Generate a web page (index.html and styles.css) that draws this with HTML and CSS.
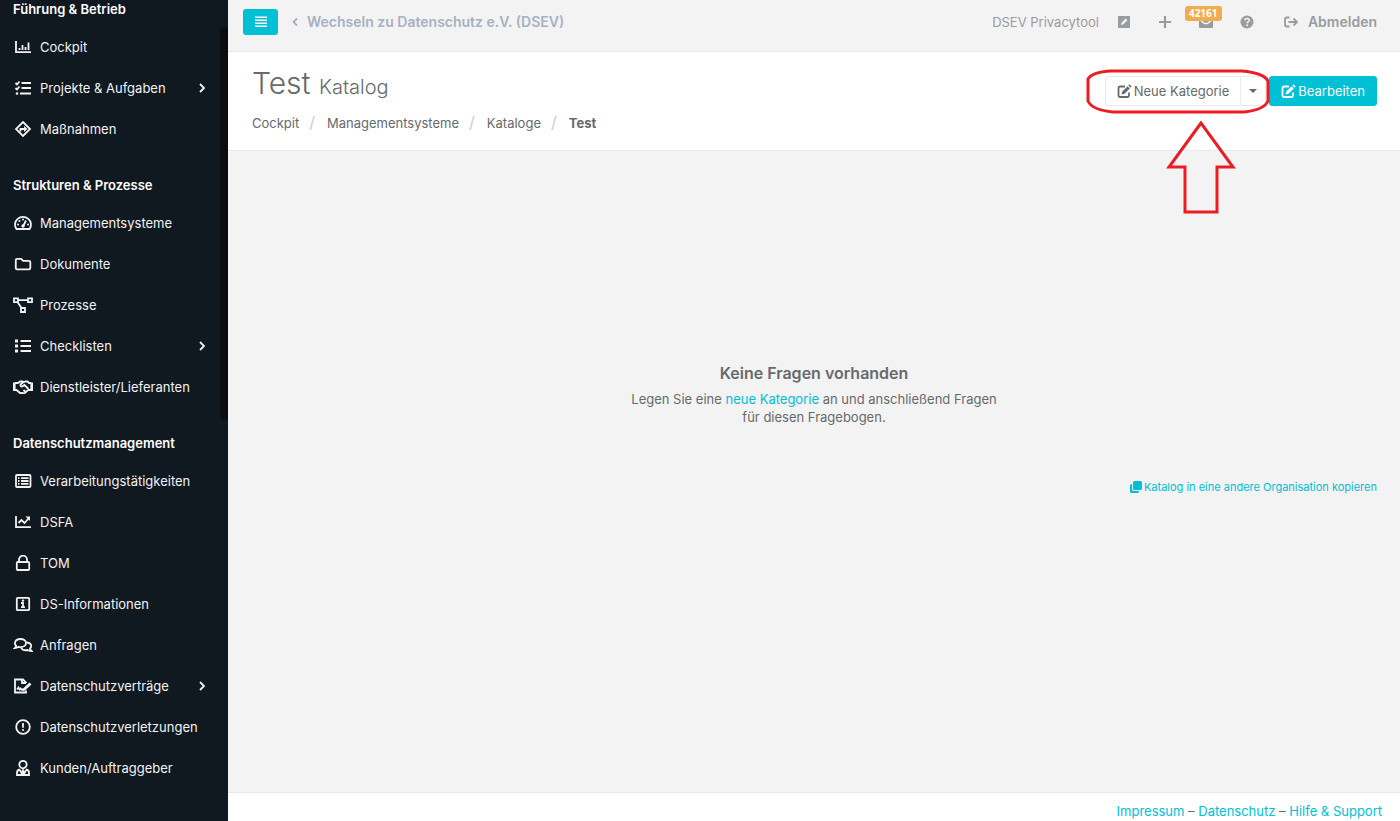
FILE: index.html
```html
<!DOCTYPE html>
<html lang="de">
<head>
    <meta charset="UTF-8">
    <meta name="viewport" content="width=device-width, initial-scale=1.0">
    <title>Test - Katalog</title>
    <link rel="stylesheet" href="styles.css">
</head>
<body>
<nav class="sidebar">
    <h3 class="nav-title">Führung &amp; Betrieb</h3>
    <ul class="nav-list">
        <li><a href="#"><svg class="icon" viewBox="0 0 20 16"><path d="M3 2v11.200h15M6.500 11V9M9.500 11V6M12.500 11V8M15.500 11V3.500"/></svg>Cockpit</a></li>
        <li><a href="#"><svg class="icon" viewBox="0 0 20 16"><path d="M2.500 3l1.500 1.500L6.500 1.500M2.500 8L4 9.500l2.500-3M8.500 3h9.500M8.500 8h9.500M7 13.500h11"/><circle class="solid" cx="4" cy="13.500" r="1.300"/></svg>Projekte &amp; Aufgaben<svg class="arrow" viewBox="0 0 8 10"><path d="M2 1l4 4-4 4"/></svg></a></li>
        <li><a href="#"><svg class="icon" viewBox="0 0 20 16"><path d="M10 1l7 7-7 7-7-7z"/><path d="M7.500 10.500V8H12"/><path class="solid" d="M11 5l3.500 3-3.500 3z"/></svg>Maßnahmen</a></li>
    </ul>

    <h3 class="nav-title">Strukturen &amp; Prozesse</h3>
    <ul class="nav-list">
        <li><a href="#"><svg class="icon" viewBox="0 0 20 16"><path d="M3.400 14a8 7.700 0 1 1 13.200 0zM10 11.500l3-6"/><circle class="solid" cx="10" cy="11" r="1.700"/><circle class="solid" cx="5" cy="9.500" r="1"/><circle class="solid" cx="6.500" cy="6" r="1"/><circle class="solid" cx="10" cy="4.500" r="1"/><circle class="solid" cx="15" cy="9.500" r="1"/></svg>Managementsysteme</a></li>
        <li><a href="#"><svg class="icon" viewBox="0 0 20 16"><path d="M4 2.800h4.200l2 2H16q1.300 0 1.300 1.200v6q0 1.300-1.300 1.300H4Q2.800 13.300 2.800 12V4q0-1.200 1.200-1.200z"/></svg>Dokumente</a></li>
        <li><a href="#"><svg class="icon" viewBox="0 0 20 16"><path d="M1 1.300h4v3.800H1zM15 1.300h4v3.800h-4zM8 11h4v4H8zM5 3.200h10M4.500 5l4 6"/></svg>Prozesse</a></li>
        <li><a href="#"><svg class="icon" viewBox="0 0 20 16"><path d="M7.500 3H18M7.500 8H18M7.500 13H18"/><path class="solid" d="M2 1.500h3v3H2zM2 6.500h3v3H2zM2 11.500h3v3H2z"/></svg>Checklisten<svg class="arrow" viewBox="0 0 8 10"><path d="M2 1l4 4-4 4"/></svg></a></li>
        <li><a href="#"><svg class="icon" viewBox="0 0 20 16"><path class="solid" d="M0 3.500h2.600V12H0zM17.400 3.500H20V12h-2.600z"/><path d="M2 4h3l2-1.500h2.500L11 3l1.500-.5h2L16 4h2M2 11h1.500l3.500 3h2l1 .2 2-.2 3-3H18M10.500 3L7.500 5.500q-.3 2 1.500 2l2.500-1.500 4 4M10.500 11l1.500 1.500"/></svg>Dienstleister/Lieferanten</a></li>
    </ul>

    <h3 class="nav-title">Datenschutzmanagement</h3>
    <ul class="nav-list">
        <li><a href="#"><svg class="icon" viewBox="0 0 20 16"><rect x="3" y="2" width="14.500" height="12" rx="1"/><path d="M8 5.200h7.500M8 8h7.500M8 10.800h7.500M5 5.200h1.500M5 8h1.500M5 10.800h1.500"/></svg>Verarbeitungstätigkeiten</a></li>
        <li><a href="#"><svg class="icon" viewBox="0 0 20 16"><path d="M3 2v11.200h15M5.500 9l3-3 3 3 4-4.500"/><path class="solid" d="M12.500 2.500H17V7z"/></svg>DSFA</a></li>
        <li><a href="#"><svg class="icon" viewBox="0 0 20 16"><rect x="3.800" y="7" width="12.400" height="8" rx="1"/><path d="M6 7V4.500a4 3.800 0 0 1 8 0V7"/></svg>TOM</a></li>
        <li><a href="#"><svg class="icon" viewBox="0 0 20 16"><rect x="3.800" y="1.800" width="12.400" height="12.400" rx="1"/><path d="M8 7h2v4M8 11.200h4"/><circle class="solid" cx="10" cy="4.600" r="1.200"/></svg>DS-Informationen</a></li>
        <li><a href="#"><svg class="icon" viewBox="0 0 20 16"><path d="M2 11q1.300-1.200 1.100-2.200C.5 6 2.500 2 7.300 2c7.600 0 7.600 8.200 0 8.200q-1.200 0-2-.3Q4 11 2 11z"/><path d="M13.500 5.500c4.500 0 6 3.500 3.500 6q.3 1.500 1.500 2.500-2.500 0-4-1-4.500 1-6.500-2"/></svg>Anfragen</a></li>
        <li><a href="#"><svg class="icon" viewBox="0 0 20 16"><path d="M13 5V4.500L10 1.500H2v13h11v-2M9 1.500V5h4M4 11.500l1.500-2 1.200 2 1-1 .8 1h1.500"/><path class="solid" d="M16.500 4.500l2 2-6.500 6-2.700.7.700-2.700z"/></svg>Datenschutzverträge<svg class="arrow" viewBox="0 0 8 10"><path d="M2 1l4 4-4 4"/></svg></a></li>
        <li><a href="#"><svg class="icon" viewBox="0 0 20 16"><circle cx="10" cy="8" r="6.800"/><path d="M10 4v4.800"/><circle class="solid" cx="10" cy="11" r="1.100"/></svg>Datenschutzverletzungen</a></li>
        <li><a href="#"><svg class="icon" viewBox="0 0 20 16"><circle cx="10" cy="4.600" r="3.700"/><path d="M7 9.500q-3 .5-3 3.200V15h12v-2.300q0-2.700-3-3.200M7 10l2 4 1-3.500 1 3.500 2-4"/></svg>Kunden/Auftraggeber</a></li>
    </ul>
    <div class="scroll-thumb"></div>
</nav>

<div class="page">
    <div class="topbar">
        <button type="button" class="menu-btn" aria-label="Menü"><svg class="bars" viewBox="0 0 12 12"><path d="M0 1.200h12M0 4.200h12M0 7.200h12M0 10.200h12"/></svg></button>
        <a href="#" class="switch-link"><svg class="chevron" viewBox="0 0 8 10"><path d="M6 1.500L2.500 5 6 8.500"/></svg>Wechseln zu Datenschutz e.V. (DSEV)</a>
        <div class="top-links">
            <span class="user-name">DSEV Privacytool</span>
            <a href="#" class="top-icon" aria-label="Bearbeiten"><svg viewBox="0 0 14 14"><rect x="1" y="1" width="12" height="12" rx="1"/><path class="cut" d="M4 10l.5-2.200L8.700 3.600l1.700 1.700L6.200 9.500z"/></svg></a>
            <a href="#" class="top-icon" aria-label="Neu"><svg viewBox="0 0 14 14"><path d="M5.900 1h2.200v4.900H13v2.200H8.100V13H5.900V8.100H1V5.900h4.900z"/></svg></a>
            <a href="#" class="top-icon" aria-label="Nachrichten"><svg viewBox="0 0 14 14"><rect x="0" y="2" width="14" height="11" rx="1"/><path class="cut-line" d="M0 4l5.500 4.500h3L14 4"/></svg><span class="badge">42161</span></a>
            <a href="#" class="top-icon" aria-label="Hilfe"><svg viewBox="0 0 14 14"><circle cx="7" cy="7" r="6.500"/><path class="cut-line" d="M4.800 5.400C5 2.800 9.200 3 9.200 5.300 9.200 6.800 7 6.800 7 8.300"/><circle class="cut" cx="7" cy="10.300" r="1"/></svg></a>
            <a href="#" class="logout"><svg class="logout-icon" viewBox="0 0 14 14"><path d="M5.500 2.500H3q-2 0-2 2v5q0 2 2 2h2.500M4.500 7h8M9.500 3.500L13 7l-3.500 3.500"/></svg>Abmelden</a>
        </div>
    </div>

    <header class="page-heading">
        <div>
            <h1>Test <small>Katalog</small></h1>
            <ol class="breadcrumb">
                <li><a href="#">Cockpit</a></li>
                <li><a href="#">Managementsysteme</a></li>
                <li><a href="#">Kataloge</a></li>
                <li><strong>Test</strong></li>
            </ol>
        </div>
        <div class="actions">
            <div class="btn-group">
                <button type="button" class="btn btn-white"><svg class="edit-icon" viewBox="0 0 15 14"><path class="edit-box" d="M8 2.500H3Q1.500 2.500 1.500 4v7.500Q1.500 13 3 13h7.500q1.500 0 1.500-1.500V8.500"/><path d="M12.500 0.300l2.200 2.200-1.200 1.200-2.200-2.200zM10.600 2.200l2.200 2.200L7.500 9.700l-3 .8.800-3z"/></svg>Neue Kategorie</button>
                <button type="button" class="btn btn-white btn-caret" aria-label="Weitere Optionen"><span class="caret"></span></button>
            </div>
            <button type="button" class="btn btn-primary"><svg class="edit-icon" viewBox="0 0 15 14"><path class="edit-box" d="M8 2.500H3Q1.500 2.500 1.500 4v7.500Q1.500 13 3 13h7.500q1.500 0 1.500-1.500V8.500"/><path d="M12.500 0.300l2.200 2.200-1.200 1.200-2.200-2.200zM10.600 2.200l2.200 2.200L7.500 9.700l-3 .8.800-3z"/></svg>Bearbeiten</button>
            <svg class="marker" viewBox="0 0 184 148"><path d="M2 11Q6 4 25 3H156Q178 5 182 13V33Q178 42 158 44H27Q6 42 2 33ZM115 55L83 99H99V144H131V99H147Z"/></svg>
        </div>
    </header>

    <main class="content">
        <section class="empty">
            <h2>Keine Fragen vorhanden</h2>
            <p>Legen Sie eine <a href="#">neue Kategorie</a> an und anschließend Fragen<br>für diesen Fragebogen.</p>
        </section>
        <a href="#" class="copy-link"><svg class="copy-icon" viewBox="0 0 12 12"><rect x="3" y="0" width="9" height="9" rx="1.500"/><path d="M2 3H1.500Q0 3 0 4.500v6Q0 12 1.500 12h6Q9 12 9 10.500V10H4Q2 10 2 8z"/></svg>Katalog in eine andere Organisation kopieren</a>
    </main>

    <footer class="footer">
        <a href="#">Impressum</a> – <a href="#">Datenschutz</a> – <a href="#">Hilfe &amp; Support</a>
    </footer>
</div>
</body>
</html>
```

FILE: styles.css
```css
* {
    box-sizing: border-box;
}
body {
    margin: 0;
    display: flex;
    height: 100vh;
    overflow: hidden;
    background: #f3f3f3;
    color: #676a6c;
    font-family: Inter, "Open Sans", sans-serif;
    font-size: 13px;
    line-height: 18px;
}
a {
    color: #00c0d6;
    text-decoration: none;
}
button {
    font-family: inherit;
    cursor: pointer;
}

/* Sidebar */
.sidebar {
    position: relative;
    flex: 0 0 228px;
    overflow: hidden;
    background: #101820;
}
.nav-title {
    margin: 0 0 8px;
    padding-left: 13px;
    color: #fff;
    font-size: 13px;
    font-weight: 600;
}
.nav-list {
    list-style: none;
    margin: 0 0 27px;
    padding: 0;
}
.nav-list a {
    display: flex;
    align-items: center;
    height: 41px;
    padding: 0 22px 0 13px;
    color: #f2f3f4;
}
.icon {
    width: 20px;
    height: 16px;
    margin-right: 7px;
}
.icon, .arrow, .bars, .chevron, .logout-icon {
    fill: none;
    stroke: currentColor;
    stroke-width: 1.8;
}
.icon .solid {
    fill: currentColor;
    stroke: none;
}
.arrow {
    width: 8px;
    height: 10px;
    margin-left: auto;
}
.scroll-thumb {
    position: absolute;
    top: 27px;
    right: 0;
    width: 8px;
    height: 393px;
    border-radius: 4px;
    background: #0b0d10;
}

/* Top bar */
.page {
    flex: 1;
    min-width: 0;
    display: flex;
    flex-direction: column;
}
.topbar {
    display: flex;
    align-items: center;
    padding: 9px 23px 16px 15px;
    border-bottom: 1px solid #e7eaec;
}
.menu-btn {
    display: flex;
    align-items: center;
    justify-content: center;
    width: 35px;
    height: 26px;
    padding: 0;
    border: none;
    border-radius: 3px;
    background: #00c0d6;
    color: #fff;
}
.bars {
    width: 12px;
    height: 12px;
    stroke-width: 1.5;
}
.chevron {
    width: 8px;
    height: 10px;
    margin-right: 8px;
}
.switch-link {
    display: flex;
    align-items: center;
    margin-left: 13px;
    color: #a7b1c2;
    font-size: 14px;
    font-weight: 600;
}
.top-links {
    display: flex;
    align-items: center;
    margin-left: auto;
    color: #999c9e;
}
.user-name {
    margin-right: 18px;
}
.top-icon {
    position: relative;
    display: flex;
    margin-right: 27px;
    color: #999c9e;
}
.top-icon svg {
    width: 14px;
    height: 14px;
    fill: currentColor;
}
.top-icon .cut {
    fill: #f3f3f3;
}
.top-icon .cut-line {
    fill: none;
    stroke: #f3f3f3;
    stroke-width: 1.5;
}
.badge {
    position: absolute;
    top: -9px;
    left: -14px;
    padding: 0 4px;
    border-radius: 3px;
    background: #f0ad4e;
    color: #fff;
    font-family: "Open Sans", sans-serif;
    font-size: 10px;
    font-weight: 700;
    line-height: 15px;
}
.logout {
    display: flex;
    align-items: center;
    gap: 10px;
    margin-left: 3px;
    color: #999c9e;
    font-size: 14px;
    font-weight: 600;
}
.logout-icon {
    width: 14px;
    height: 14px;
}

/* Page heading */
.page-heading {
    display: flex;
    justify-content: space-between;
    align-items: flex-start;
    padding: 12px 23px 18px 24px;
    border-bottom: 1px solid #e7eaec;
    background: #fff;
}
h1 {
    margin: 0 0 7px;
    font-size: 30px;
    font-weight: 300;
    line-height: 38px;
}
h1 small {
    font-size: 20px;
    font-weight: 300;
}
.breadcrumb {
    display: flex;
    align-items: baseline;
    list-style: none;
    margin: 0;
    padding: 0;
}
.breadcrumb a {
    color: inherit;
}
.breadcrumb li + li::before {
    content: "/";
    padding: 0 12px 0 10px;
    color: #ccc;
    font-size: 16px;
}
.actions {
    position: relative;
    display: flex;
    gap: 3px;
    padding-top: 12px;
}
.btn-group {
    display: flex;
}
.btn {
    display: flex;
    align-items: center;
    gap: 2px;
    height: 30px;
    padding: 0 11px;
    border: 1px solid #00c0d6;
    border-radius: 3px;
    font-size: 13px;
}
.btn-primary {
    background: #00c0d6;
    color: #fff;
}
.btn-white {
    border-color: #e7eaec;
    border-radius: 3px 0 0 3px;
    background: #fff;
    color: #676a6c;
}
.btn-caret {
    margin-left: -1px;
    padding: 0 8px;
    border-radius: 0 3px 3px 0;
}
.caret {
    border-top: 4px solid #676a6c;
    border-left: 4px solid transparent;
    border-right: 4px solid transparent;
}
.edit-icon {
    width: 15px;
    height: 14px;
    fill: currentColor;
}
.edit-icon .edit-box {
    fill: none;
    stroke: currentColor;
    stroke-width: 1.8;
}
.marker {
    position: absolute;
    top: 4px;
    right: 107px;
    width: 184px;
    height: 148px;
    fill: none;
    stroke: #ec1c24;
    stroke-width: 3;
    pointer-events: none;
}

/* Content */
.content {
    flex: 1;
    display: flex;
    flex-direction: column;
    padding: 212px 23px 0;
}
.empty {
    text-align: center;
}
.empty h2 {
    margin: 0 0 7px;
    font-size: 16px;
    font-weight: 600;
    line-height: 20px;
}
.empty p {
    margin: 0 0 52px;
}
.copy-link {
    display: flex;
    align-items: center;
    gap: 2px;
    align-self: flex-end;
    font-size: 11px;
}
.copy-icon {
    width: 12px;
    height: 12px;
    fill: currentColor;
}
.footer {
    padding: 9px 18px 1px;
    border-top: 1px solid #e7eaec;
    background: #fff;
    text-align: right;
}
```
